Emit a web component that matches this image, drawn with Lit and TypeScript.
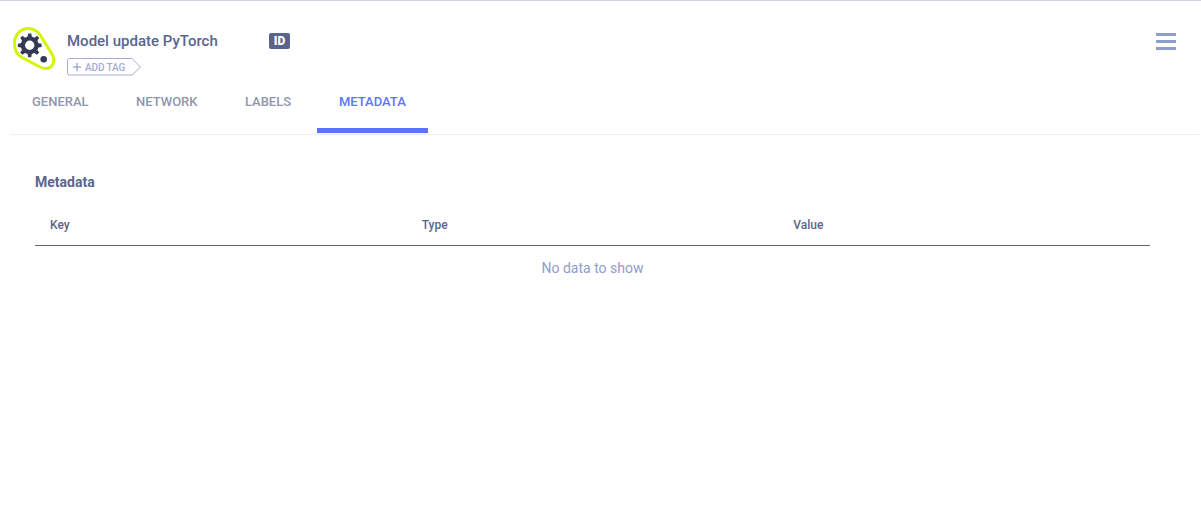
import { LitElement, html, css } from "lit";
import { customElement } from "lit/decorators.js";

function gearPath(cx: number, cy: number, outer: number, inner: number, hole: number, teeth: number): string {
  const pts: string[] = [];
  const step = (Math.PI * 2) / teeth;
  for (let i = 0; i < teeth; i++) {
    const a = i * step - Math.PI / 2;
    const add = (r: number, da: number) =>
      pts.push(`${(cx + r * Math.cos(a + da)).toFixed(2)} ${(cy + r * Math.sin(a + da)).toFixed(2)}`);
    add(inner, -step * 0.3);
    add(outer, -step * 0.17);
    add(outer, step * 0.17);
    add(inner, step * 0.3);
  }
  const ring = `M${cx - hole} ${cy}a${hole} ${hole} 0 1 0 ${hole * 2} 0a${hole} ${hole} 0 1 0 ${-hole * 2} 0Z`;
  return `M${pts.join("L")}Z${ring}`;
}

@customElement("app-root")
export class AppRoot extends LitElement {
  static styles = css`
    :host { display: block; height: 531px; box-sizing: border-box; background: #fff; border-top: 1px solid #d0d3dd; font-family: Roboto, "Liberation Sans", sans-serif; color: #5a658e; overflow: hidden; }
    .header { display: flex; height: 85px; padding: 26px 25px 0 13px; box-sizing: border-box; }
    .logo { width: 44px; height: 46px; flex: none; display: block; }
    .info { margin-left: 10px; width: 202px; flex: none; padding-top: 4px; }
    .name { font-size: 15px; font-weight: 500; line-height: 20px; color: #5a658e; }
    .tag { display: block; margin-top: 7px; }
    .tag-text { font-size: 10px; font-weight: 500; letter-spacing: -0.1px; fill: #a4add1; }
    .id { width: 21px; height: 16px; margin-top: 6px; border-radius: 2px; background: #5a658e; color: #fff; font-size: 12px; font-weight: 900; display: flex; align-items: center; justify-content: center; flex: none; }
    .spacer { flex: 1; }
    .menu { display: flex; flex-direction: column; gap: 3.4px; width: 20px; margin-top: 6px; flex: none; }
    .menu span { height: 3.4px; background: #8f9dcb; }
    .tabs { display: flex; gap: 3.4px; height: 49px; margin: 0 2px 0 10px; border-bottom: 1px solid #eceef2; box-sizing: border-box; }
    .tab { font-size: 13px; font-weight: 500; color: #8f96ad; padding: 9px 22px 0; box-sizing: border-box; height: 47px; line-height: 14px; }
    .tab.active { color: #5a74ff; border-bottom: 5px solid #5a74ff; padding-left: 22.4px; padding-right: 22.2px; }
    .content { padding: 38px 51px 0 35px; }
    h2 { margin: 0; font-size: 14px; font-weight: 700; line-height: 18px; color: #5a658e; }
    .thead { display: grid; grid-template-columns: repeat(3, 1fr); margin-top: 15px; height: 40px; padding-bottom: 2px; border-bottom: 1px solid #5a658e; box-sizing: border-box; align-items: center; font-size: 12px; font-weight: 500; }
    .thead div { padding-left: 15px; }
    .empty { text-align: center; font-size: 14px; color: #8f9dcb; margin-top: 14px; line-height: 16px; }
  `;
  render() {
    return html`
      <div class="header">
        <svg class="logo" viewBox="0 0 44 46">
          <path d="M15 1.500C21 1.500 25 4.500 27.500 8.500L39.500 28C42.500 33.500 40 41.500 32.500 41.500C30 41.500 28 40.500 26 39.500L9 30.500C4 28 1.500 22.500 1.500 16C1.500 8 7.500 1.500 15 1.500Z" fill="none" stroke="#d3f500" stroke-width="3"/>
          <path fill="#353a54" fill-rule="evenodd" d="${gearPath(16.7, 18.3, 12, 9, 4.7, 8)}"/>
          <circle cx="30.700" cy="32.300" r="3.300" fill="#353a54"/>
        </svg>
        <div class="info">
          <div class="name">Model update PyTorch</div>
          <svg class="tag" width="76" height="18" viewBox="0 0 76 18">
            <path d="M2.500.5H65L73.500 9 65 17H2.500a2 2 0 0 1-2-2V2.500a2 2 0 0 1 2-2Z" fill="none" stroke="#a4add1"/>
            <path d="M6 9h8M10 5v8" stroke="#a4add1" stroke-width="1.500"/>
            <text class="tag-text" x="18" y="12.500">ADD TAG</text>
          </svg>
        </div>
        <div class="id">ID</div>
        <div class="spacer"></div>
        <div class="menu"><span></span><span></span><span></span></div>
      </div>
      <div class="tabs">
        <div class="tab">GENERAL</div>
        <div class="tab">NETWORK</div>
        <div class="tab">LABELS</div>
        <div class="tab active">METADATA</div>
      </div>
      <div class="content">
        <h2>Metadata</h2>
        <div class="thead"><div>Key</div><div>Type</div><div>Value</div></div>
        <div class="empty">No data to show</div>
      </div>
    `;
  }
}
